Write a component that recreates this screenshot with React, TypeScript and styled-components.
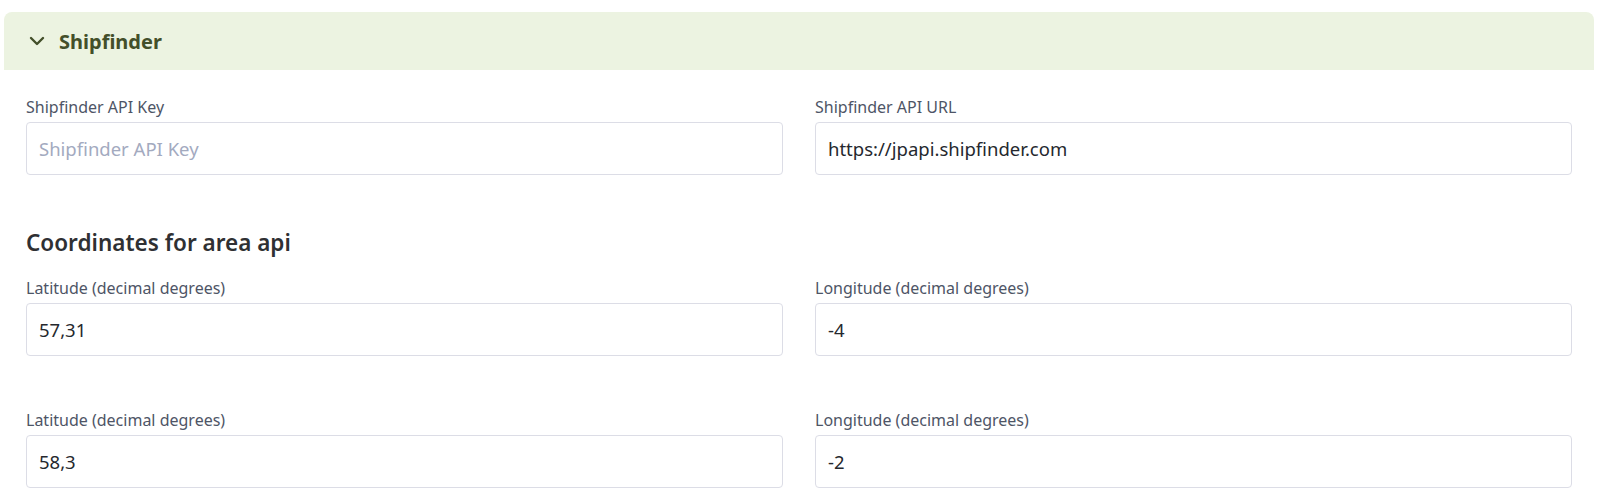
import styled, { createGlobalStyle } from 'styled-components';

const GlobalStyle = createGlobalStyle`
  body {
    margin: 0;
    background: #ffffff;
    font-family: 'Noto Sans', 'Open Sans', sans-serif;
  }
`;

const Page = styled.div`
  padding: 12px 6px 0 4px;
`;

const SectionHeader = styled.button`
  display: flex;
  align-items: center;
  gap: 14px;
  width: 100%;
  height: 58px;
  padding: 0 0 0 25px;
  border: none;
  border-radius: 8px 8px 0 0;
  background: #ecf3e1;
  color: #434f2a;
  font-family: inherit;
  font-size: 20px;
  font-weight: 700;
  cursor: pointer;
`;

const SectionBody = styled.div`
  display: flex;
  flex-direction: column;
  padding: 25px 22px 0 22px;
`;

const Row = styled.div<{ $gapAfter?: number }>`
  display: grid;
  grid-template-columns: 1fr 1fr;
  column-gap: 32px;
  margin-bottom: ${(p) => p.$gapAfter ?? 0}px;
`;

const Field = styled.div`
  display: flex;
  flex-direction: column;
`;

const Label = styled.label`
  font-size: 16px;
  line-height: 24px;
  color: #4e5566;
  margin-bottom: 3px;
`;

const Input = styled.input`
  box-sizing: border-box;
  height: 53px;
  padding: 0 12px;
  border: 1px solid #dcdde6;
  border-radius: 4px;
  font-family: inherit;
  font-size: 18.5px;
  color: #25282e;
  background: #fff;
  outline: none;

  &::placeholder {
    color: #a3aabf;
  }
`;

const SubHeading = styled.h3`
  margin: 2px 0 18px;
  font-size: 22.5px;
  line-height: 30px;
  font-weight: 600;
  color: #2f3033;
`;

const Chevron = () => (
  <svg width="16" height="10" viewBox="0 0 16 10" fill="none">
    <path
      d="M2 2l6 6 6-6"
      stroke="#434f2a"
      strokeWidth="2.4"
      strokeLinecap="round"
      strokeLinejoin="round"
    />
  </svg>
);

type FieldProps = {
  label: string;
  value?: string;
  placeholder?: string;
};

const TextField = ({ label, value, placeholder }: FieldProps) => (
  <Field>
    <Label>{label}</Label>
    <Input defaultValue={value} placeholder={placeholder} />
  </Field>
);

const coordinates = [
  { lat: '57,31', lon: '-4' },
  { lat: '58,3', lon: '-2' },
];

export default function App() {
  return (
    <Page>
      <GlobalStyle />
      <SectionHeader>
        <Chevron />
        Shipfinder
      </SectionHeader>
      <SectionBody>
        <Row $gapAfter={51}>
          <TextField label="Shipfinder API Key" placeholder="Shipfinder API Key" />
          <TextField label="Shipfinder API URL" value="https://jpapi.shipfinder.com" />
        </Row>
        <SubHeading>Coordinates for area api</SubHeading>
        {coordinates.map((c, i) => (
          <Row key={i} $gapAfter={52}>
            <TextField label="Latitude (decimal degrees)" value={c.lat} />
            <TextField label="Longitude (decimal degrees)" value={c.lon} />
          </Row>
        ))}
      </SectionBody>
    </Page>
  );
}
